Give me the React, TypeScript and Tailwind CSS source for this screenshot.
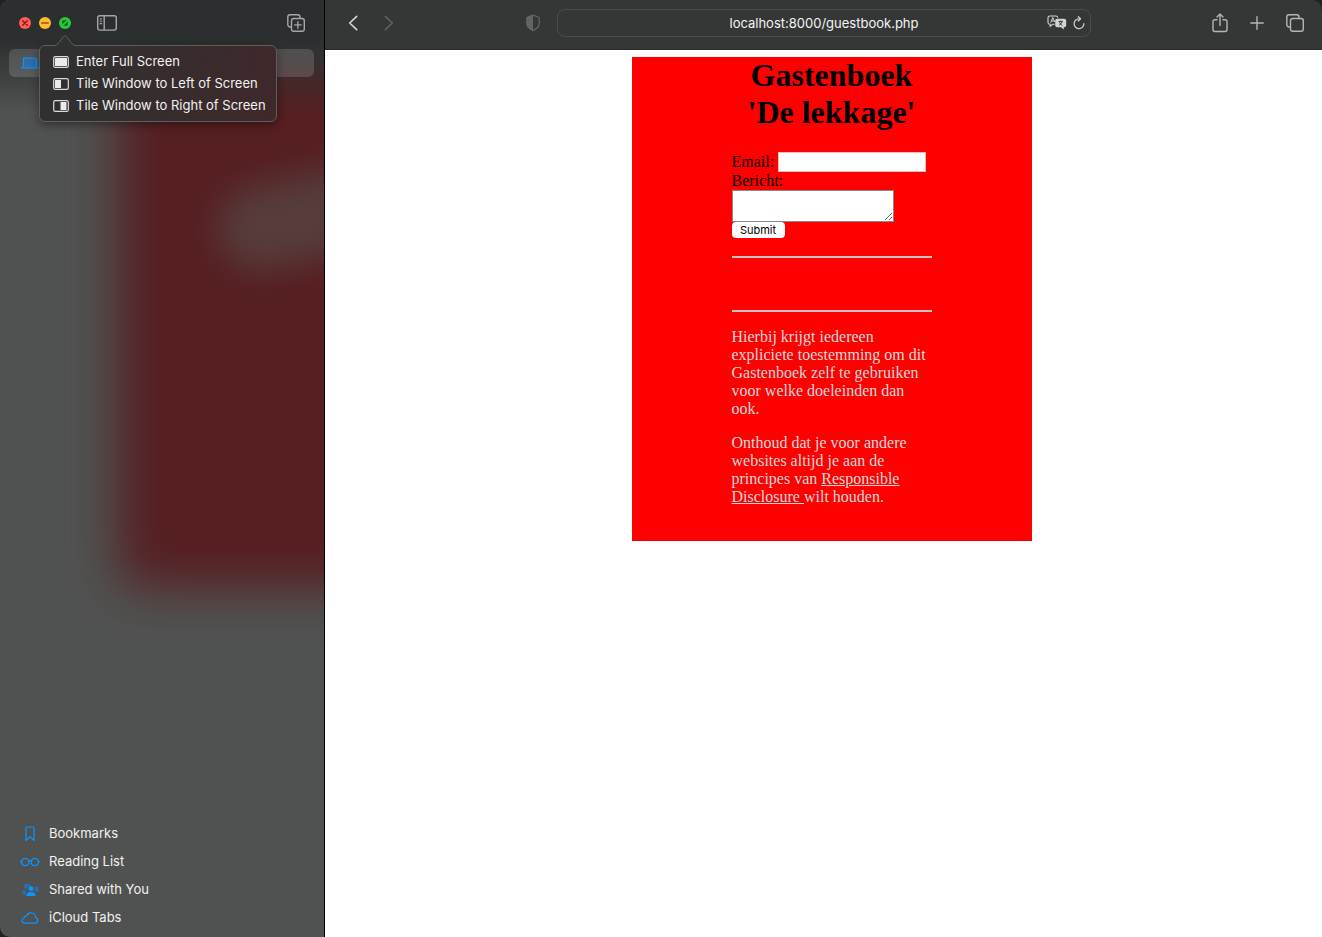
import React from "react";

function SidebarIcon() {
  return (
    <svg width="20" height="16" viewBox="0 0 20 16" fill="none" stroke="currentColor" strokeWidth="1.4">
      <rect x="0.7" y="0.7" width="18.6" height="14.4" rx="2" />
      <path d="M7.200 1v14" />
      <path d="M2.700 4h2.400M2.700 6.300h2.400M2.700 8.600h2.400" strokeWidth="1.100" />
    </svg>
  );
}

function NewTabGroupIcon() {
  return (
    <svg width="18" height="18" viewBox="0 0 18 18" fill="none" stroke="currentColor" strokeWidth="1.400" strokeLinecap="round">
      <path d="M4.400 13H3a2.200 2.200 0 0 1-2.200-2.200V3A2.200 2.200 0 0 1 3 .8h7.800A2.200 2.200 0 0 1 13 3v1.200" />
      <rect x="4.500" y="4.500" width="12.800" height="12.800" rx="2.200" />
      <path d="M10.900 7.600v6.600M7.600 10.900h6.600" />
    </svg>
  );
}

function LaptopIcon() {
  return (
    <svg width="18" height="12" viewBox="0 0 18 12">
      <path d="M2.500 10.500V2q0-1 1-1h11q1 0 1 1v8.500" fill="#0a84ff" fillOpacity=".45" stroke="#0a95ff" strokeWidth="1.200" />
      <path d="M0 10.900h18" stroke="#0a95ff" strokeWidth="1.400" />
    </svg>
  );
}

function ScreenIcon({ part }: { part: "full" | "left" | "right" }) {
  return (
    <svg width="16" height="12" viewBox="0 0 16 12">
      <rect x="0.700" y="0.600" width="14.600" height="10.800" rx="1.600" fill="none" stroke="#dcdbdb" strokeWidth="1.200" />
      <rect x={part === "right" ? 7.5 : 2} y="2" width={part === "full" ? 12 : 6} height="8" rx="0.500" fill="#ecebeb" />
    </svg>
  );
}

function BookmarkIcon() {
  return (
    <svg width="20" height="16" viewBox="0 0 20 16" fill="none" stroke="#0a95ff" strokeWidth="1.200" strokeLinejoin="round">
      <path d="M6 2.200Q6 1 7.200 1h5.600Q14 1 14 2.200V14.600L10 10.800 6 14.600Z" />
    </svg>
  );
}

function GlassesIcon() {
  return (
    <svg width="20" height="16" viewBox="0 0 20 16" fill="none" stroke="#0a95ff" strokeWidth="1.300" strokeLinecap="round">
      <circle cx="5.200" cy="8" r="3.700" />
      <circle cx="14.800" cy="8" r="3.700" />
      <path d="M8.800 7.200q1.200-.9 2.400 0M1.500 7.500H.7M18.500 7.500h.8" />
    </svg>
  );
}

function SharedIcon() {
  return (
    <svg width="20" height="16" viewBox="0 0 20 16">
      <g fill="#0a84ff" fillOpacity=".6">
        <path d="M4.200 3.200Q4.200 2 5.400 2h4.200Q10.500 2 10.500 3 7.800 3.600 7.700 6.600H5.700L5 7.400V6.300Q4.200 6.200 4.200 5.300Z" />
        <rect x="2.600" y="8.200" width="3.400" height="4.600" rx="1.200" />
        <rect x="15" y="4.400" width="3.600" height="5.400" rx="1" />
      </g>
      <circle cx="11" cy="6.600" r="2.500" fill="#0a95ff" />
      <path d="M6.400 14q0-4 4.600-4t4.600 4Z" fill="#0a95ff" />
    </svg>
  );
}

function CloudIcon() {
  return (
    <svg width="20" height="16" viewBox="0 0 20 16" fill="none" stroke="#0a95ff" strokeWidth="1.200">
      <path d="M5.200 13.200h9.600a2.900 2.900 0 0 0 .8-5.700 4.600 4.600 0 0 0-8.900-1.600A2.700 2.700 0 0 0 4 8.100a2.600 2.600 0 0 0 1.200 5.100Z" />
    </svg>
  );
}

function Chevron({ flip }: { flip?: boolean }) {
  return (
    <svg width="10" height="16" viewBox="0 0 10 16" fill="none" stroke="currentColor" strokeWidth="1.600" strokeLinecap="round" strokeLinejoin="round">
      <path d={flip ? "M1.300 1.400 8.300 8l-7 6.600" : "M8.700 1.400 1.700 8l7 6.600"} />
    </svg>
  );
}

function ShieldIcon() {
  return (
    <svg width="14" height="18" viewBox="0 0 14 18">
      <path d="M7 1.200 12.400 3q.8.300.8 1.200v5.600q0 3.800-6.200 6.900Q.8 13.600.8 9.800V4.200Q.8 3.300 1.600 3Z" fill="none" stroke="#626463" strokeWidth="1.300" />
      <path d="M7 1.200V16.700Q.8 13.600.8 9.800V4.200Q.8 3.300 1.600 3Z" fill="#626463" />
    </svg>
  );
}

function TranslateIcon() {
  return (
    <svg width="20" height="15" viewBox="0 0 20 15">
      <path d="M7.600 9.300H5.700L3.200 11.400V9.300H2.800Q1 9.300 1 7.500V2.800Q1 1 2.800 1h6Q10.600 1 10.600 2.800" fill="none" stroke="#d3d4d3" strokeWidth="1.100" />
      <path d="M3.700 7.700 5.800 2.500 7.800 7M4.400 6h2.800" fill="none" stroke="#d3d4d3" strokeWidth="1" />
      <path d="M10.200 3.800h7q2 0 2 2v4.400q0 2-2 2h-.4v2.200l-2.700-2.200h-3.900q-2 0-2-2V5.800q0-2 2-2Z" fill="#d3d4d3" />
      <path d="M11.400 6.600h4.600M13.700 5.400v1.200M12 10.400q2.700-1.500 3-3.700M12.400 7.200q.8 2.200 3 3.300" fill="none" stroke="#353736" strokeWidth=".9" />
    </svg>
  );
}

function ReloadIcon() {
  return (
    <svg width="12" height="14" viewBox="0 0 12 14" fill="none" stroke="#cfd0cf" strokeWidth="1.200" strokeLinecap="round" strokeLinejoin="round">
      <path d="M10.900 7.600A4.900 4.900 0 1 1 6 2.800h1.300" />
      <path d="M5.300.7 7.500 2.800 5.300 5" />
    </svg>
  );
}

function ShareIcon() {
  return (
    <svg width="16" height="20" viewBox="0 0 16 20" fill="none" stroke="currentColor" strokeWidth="1.400" strokeLinecap="round" strokeLinejoin="round">
      <path d="M5 6.800H3Q1 6.800 1 8.800v7.700q0 2 2 2h10q2 0 2-2V8.800q0-2-2-2h-2" />
      <path d="M8 12.500V1.200M5 4l3-2.900L11 4" />
    </svg>
  );
}

function PlusIcon() {
  return (
    <svg width="14" height="14" viewBox="0 0 14 14" fill="none" stroke="currentColor" strokeWidth="1.400" strokeLinecap="round">
      <path d="M7 .8v12.400M.8 7h12.400" />
    </svg>
  );
}

function TabsIcon() {
  return (
    <svg width="18" height="18" viewBox="0 0 18 18" fill="none" stroke="currentColor" strokeWidth="1.400" strokeLinecap="round">
      <path d="M4.400 13H3a2.200 2.200 0 0 1-2.200-2.200V3A2.200 2.200 0 0 1 3 .8h7.800A2.200 2.200 0 0 1 13 3v1.200" />
      <rect x="4.500" y="4.500" width="12.800" height="12.800" rx="2.200" />
    </svg>
  );
}

function WindowButtons() {
  return (
    <div className="flex gap-2">
      <button aria-label="Close" className="size-3 rounded-full bg-[#ff5f57]">
        <svg viewBox="0 0 12 12" stroke="#8f100c" strokeWidth="1.300" strokeLinecap="round">
          <path d="m3.700 3.700 4.600 4.600M8.300 3.700 3.700 8.300" />
        </svg>
      </button>
      <button aria-label="Minimize" className="size-3 rounded-full bg-[#febc2e]">
        <svg viewBox="0 0 12 12" stroke="#985712" strokeWidth="1.400" strokeLinecap="round">
          <path d="M2.700 6h6.600" />
        </svg>
      </button>
      <button aria-label="Zoom" aria-haspopup="menu" className="size-3 rounded-full bg-[#28c840]">
        <svg viewBox="0 0 12 12" fill="#0b650d">
          <path d="M3.200 7.500V4.300q0-1.100 1.100-1.100h3.200ZM8.800 4.500v3.200q0 1.100-1.100 1.100H4.500Z" />
        </svg>
      </button>
    </div>
  );
}

const menuItems: { label: string; part: "full" | "left" | "right" }[] = [
  { label: "Enter Full Screen", part: "full" },
  { label: "Tile Window to Left of Screen", part: "left" },
  { label: "Tile Window to Right of Screen", part: "right" },
];

function ZoomMenu() {
  return (
    <div className="absolute top-[45px] left-[39px] z-20 w-[238px] rounded-md border border-[#5f5d5d] bg-[linear-gradient(100deg,#303030_10%,#382c2d_60%,#40282b)] pt-[5px] pb-1 shadow-[0_3px_10px_rgba(0,0,0,0.4)]">
      <svg className="absolute -top-3 left-3" width="26" height="13" viewBox="0 0 26 13">
        <path d="M0 13V12Q4.500 12 7 8.500L11.500 2.500Q13 .6 14.500 2.500L19 8.500Q21.500 12 26 12V13Z" fill="#303131" />
        <path d="M0 12Q4.500 12 7 8.500L11.500 2.500Q13 .6 14.500 2.500L19 8.500Q21.500 12 26 12" fill="none" stroke="#5f5d5d" />
      </svg>
      <ul role="menu">
        {menuItems.map((item) => (
          <li key={item.label} role="none">
            <button role="menuitem" className="flex h-[22px] w-full items-center gap-[7px] pl-[13px] text-left whitespace-nowrap">
              <ScreenIcon part={item.part} />
              {item.label}
            </button>
          </li>
        ))}
      </ul>
    </div>
  );
}

const links: { label: string; Icon: React.ComponentType }[] = [
  { label: "Bookmarks", Icon: BookmarkIcon },
  { label: "Reading List", Icon: GlassesIcon },
  { label: "Shared with You", Icon: SharedIcon },
  { label: "iCloud Tabs", Icon: CloudIcon },
];

function Sidebar() {
  return (
    <aside className="relative isolate flex w-[325px] shrink-0 flex-col border-r border-black bg-[#505251] text-[13px] text-[#f2f2f2]">
      <div aria-hidden="true" className="absolute inset-0 -z-10 overflow-hidden">
        <div className="absolute top-[50px] -right-24 left-[118px] h-[538px] rounded-3xl bg-[#561f22] blur-[24px]" />
        <div className="absolute top-[170px] left-[216px] h-[84px] w-[240px] -rotate-12 rounded-full bg-[#563c3a] blur-[16px]" />
        <div className="absolute inset-x-0 top-0 h-28 bg-linear-to-b from-[#2b2f2f] from-35% to-[#2b2f2f]/0" />
      </div>
      <div className="flex h-[45px] items-center pr-[19px] pl-[19px]">
        <WindowButtons />
        <button aria-label="Toggle sidebar" className="ml-[26px] text-[#a5a7a7]">
          <SidebarIcon />
        </button>
        <button aria-label="New tab group" className="ml-auto text-[#a5a7a7]">
          <NewTabGroupIcon />
        </button>
      </div>
      <ZoomMenu />
      <button aria-label="Current window" className="mt-1 mr-2.5 ml-[9px] flex h-7 items-center rounded-md bg-white/15 pl-3">
        <LaptopIcon />
      </button>
      <nav className="mt-auto pb-[5px]">
        {links.map(({ label, Icon }) => (
          <a key={label} href="#" className="flex h-7 items-center gap-[9px] pl-5">
            <Icon />
            {label}
          </a>
        ))}
      </nav>
    </aside>
  );
}

function Toolbar() {
  return (
    <header className="flex h-[50px] items-center border-b border-[#282a29] bg-[#353736] pb-1 text-[#b4b6b5]">
      <div className="flex w-[232px] shrink-0 items-center pr-[17px] pl-[23px]">
        <button aria-label="Back" className="text-[#d5d6d6]">
          <Chevron />
        </button>
        <button aria-label="Forward" className="ml-[26px] text-[#5f6160]">
          <Chevron flip />
        </button>
        <button aria-label="Privacy report" className="ml-auto">
          <ShieldIcon />
        </button>
      </div>
      <div className="relative grow">
        <input
          aria-label="Address"
          defaultValue="localhost:8000/guestbook.php"
          className="h-7 w-full rounded-lg border border-[#4b4d4c] bg-[#353736] text-center text-[13px] text-[#f4f4f4]"
        />
        <div className="absolute inset-y-0 right-1.5 flex items-center gap-1.5">
          <button aria-label="Translate">
            <TranslateIcon />
          </button>
          <button aria-label="Reload">
            <ReloadIcon />
          </button>
        </div>
      </div>
      <div className="flex w-[231px] shrink-0 items-center justify-end gap-[22px] pr-[18px]">
        <button aria-label="Share">
          <ShareIcon />
        </button>
        <button aria-label="New tab">
          <PlusIcon />
        </button>
        <button aria-label="Show tabs">
          <TabsIcon />
        </button>
      </div>
    </header>
  );
}

function Guestbook() {
  return (
    <main className="grow bg-white pt-[7px] pl-4 font-['Liberation_Serif',serif] text-[16px] leading-[18px]">
      <div className="mx-auto w-[400px] bg-[#ff0000] px-[100px] pb-[35px] text-[#d9d9d9]">
        <h1 className="text-center text-[32px] leading-[37px] font-bold text-black">Gastenboek 'De lekkage'</h1>
        <form className="mt-[21px] text-black" onSubmit={(e) => e.preventDefault()}>
          <div className="flex items-center gap-1">
            <label htmlFor="email">Email:</label>
            <input id="email" type="email" className="h-5 w-[148px] border border-[#f4b9b9] bg-white px-1 text-[13px]" />
          </div>
          <label htmlFor="message" className="block">
            Bericht:
          </label>
          <textarea id="message" className="block h-8 w-[162px] border border-[#8a8a8a] bg-white p-0.5 text-[13px]" />
          <button className="block h-4 w-[53px] rounded bg-white text-center font-['Inter',sans-serif] text-[11px] leading-4">
            Submit
          </button>
        </form>
        <hr className="mt-[18px] border-t-2 border-[#c3c3c3]" />
        <hr className="mt-[52px] border-t-2 border-[#c3c3c3]" />
        <p className="mt-4">
          Hierbij krijgt iedereen expliciete toestemming om dit Gastenboek zelf te gebruiken voor welke doeleinden dan ook.
        </p>
        <p className="mt-4">
          Onthoud dat je voor andere websites altijd je aan de principes van{" "}
          <a href="#" className="underline">
            Responsible Disclosure{" "}
          </a>
          wilt houden.
        </p>
      </div>
    </main>
  );
}

export default function App() {
  return (
    <div className="bg-[#1f2123]">
      <div className="flex min-h-screen overflow-hidden rounded-l-[10px] rounded-tr-[10px] font-['Inter',sans-serif]">
        <Sidebar />
        <div className="flex min-w-0 grow flex-col">
          <Toolbar />
          <Guestbook />
        </div>
      </div>
    </div>
  );
}
